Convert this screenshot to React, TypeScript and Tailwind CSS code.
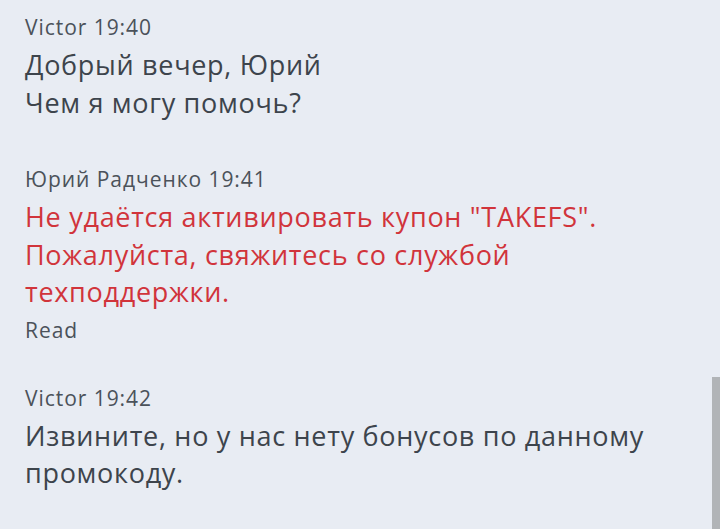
export default function App() {
  return (
    <div className="relative h-[529px] w-[720px] overflow-hidden bg-[#e8ecf3] font-['Open_Sans',sans-serif]">
      <div className="flex flex-col px-[25px] pt-[9px]">
        {/* message 1 */}
        <div className="mb-[40px]">
          <div className="text-[21px] leading-[37px] tracking-[0.95px] text-[#4b525a]">Victor 19:40</div>
          <div className="text-[27px] leading-[37.5px] tracking-[0.7px] text-[#3d444c]">
            Добрый вечер, Юрий
            <br />
            Чем я могу помочь?
          </div>
        </div>

        {/* message 2 */}
        <div className="mb-[31px]">
          <div className="text-[21px] leading-[37px] tracking-[0.95px] text-[#4b525a]">Юрий Радченко 19:41</div>
          <div className="text-[27px] leading-[37.5px] tracking-[0.7px] text-[#d1343b]">
            Не удаётся активировать купон "TAKEFS".
            <br />
            Пожалуйста, свяжитесь со службой
            <br />
            техподдержки.
          </div>
          <div className="text-[21px] leading-[38px] tracking-[0.95px] text-[#4b525a]">Read</div>
        </div>

        {/* message 3 */}
        <div>
          <div className="text-[21px] leading-[37px] tracking-[0.95px] text-[#4b525a]">Victor 19:42</div>
          <div className="text-[27px] leading-[37.5px] tracking-[0.7px] text-[#3d444c]">
            Извините, но у нас нету бонусов по данному
            <br />
            промокоду.
          </div>
        </div>
      </div>

      {/* scrollbar thumb */}
      <div className="absolute right-0 top-[377px] h-[152px] w-[8px] bg-[#b1b4b7]" />
    </div>
  );
}
